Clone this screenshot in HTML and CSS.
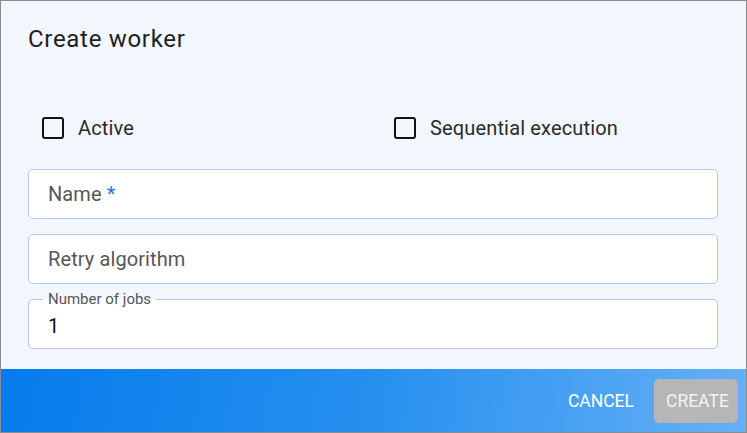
FILE: index.html
```html
<!DOCTYPE html>
<html>
<head>
<meta charset="utf-8">
<link rel="stylesheet" href="styles.css">
</head>
<body>
<div class="dialog">
  <div class="content">
    <h2 class="title">Create worker</h2>
    <div class="checks">
      <label class="check check-left"><span class="box"></span><span class="check-label">Active</span></label>
      <label class="check check-right"><span class="box"></span><span class="check-label">Sequential execution</span></label>
    </div>
    <div class="fields">
      <div class="field"><span class="placeholder">Name <span class="req">*</span></span></div>
      <div class="field"><span class="placeholder">Retry algorithm</span></div>
      <div class="field filled"><span class="float-label">Number of jobs</span><span class="value">1</span></div>
    </div>
  </div>
  <div class="footer">
    <button class="btn btn-cancel">Cancel</button>
    <button class="btn btn-create">Create</button>
  </div>
</div>
</body>
</html>
```
FILE: styles.css
```css
* { box-sizing: border-box; }
html, body { margin: 0; padding: 0; }
body { font-family: Roboto, "Noto Sans", sans-serif; background: #f2f7fe; }
.dialog {
  width: 747px;
  height: 433px;
  border: 1px solid #8c8c8c;
  background: #f2f7fe;
  display: flex;
  flex-direction: column;
}
.content {
  flex: 1;
  padding: 0 28px 0 27px;
}
.title {
  margin: 0;
  padding-top: 24px;
  font-size: 24px;
  letter-spacing: 0.7px;
  line-height: 28px;
  font-weight: 400;
  color: #1f1f1f;
}
.checks {
  display: grid;
  grid-template-columns: 352px 1fr;
  margin-top: 56px;
  height: 38px;
  align-items: center;
}
.check {
  display: flex;
  align-items: center;
  padding-left: 14px;
}
.box {
  width: 22px;
  height: 22px;
  border: 2px solid #111;
  border-radius: 3px;
  background: #f2f7fe;
}
.check-label {
  margin-left: 14px;
  font-size: 20px;
  letter-spacing: 0.15px;
  color: #2b2b2b;
}
.fields {
  margin-top: 22px;
  display: flex;
  flex-direction: column;
  gap: 15px;
}
.field {
  position: relative;
  height: 50px;
  background: #fff;
  border: 1px solid #b9c3ec;
  border-radius: 5px;
  display: flex;
  align-items: center;
  padding-left: 19px;
}
.placeholder {
  font-size: 20px;
  letter-spacing: 0.1px;
  color: #575757;
}
.req { color: #1e7ae6; }
.float-label {
  position: absolute;
  top: -10px;
  left: 14px;
  padding: 0 5px;
  font-size: 15px;
  line-height: 18px;
  color: #555;
  background: linear-gradient(to bottom, #f2f7fe 50%, #fff 50%);
}
.value {
  font-size: 20px;
  color: #111;
  margin-top: 3px;
}
.footer {
  height: 63px;
  background: linear-gradient(100deg, #057bec 0%, #2690ef 50%, #66b0f6 100%);
  display: flex;
  justify-content: flex-end;
  align-items: center;
  padding: 0 8px 0 0;
  gap: 8px;
}
.btn {
  font-family: Roboto, sans-serif;
  text-transform: uppercase;
  font-size: 17.5px;
  color: #fff;
  border: none;
  background: transparent;
  height: 44px;
  padding: 0 12px;
  border-radius: 5px;
}
.btn-create {
  background: #b6b6b6;
  color: #f4f4f4;
  width: 84px;
}
```
